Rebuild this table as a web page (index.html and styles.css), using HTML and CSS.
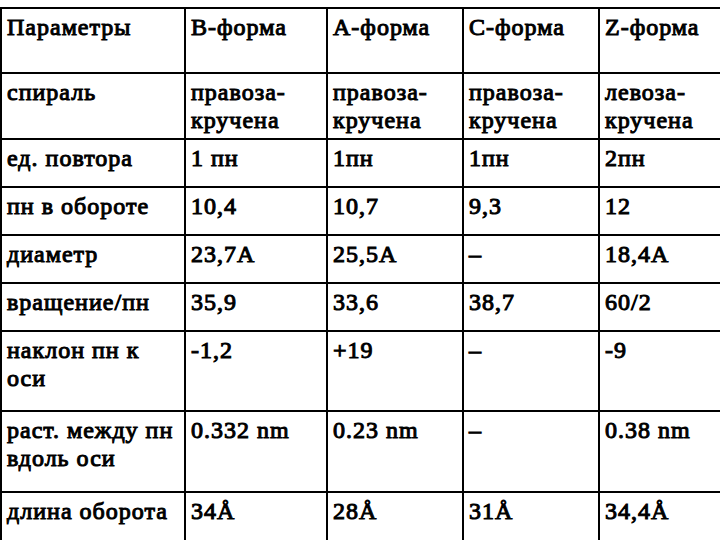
FILE: index.html
```html
<!DOCTYPE html>
<html lang="ru">
<head>
<meta charset="utf-8">
<title>Формы ДНК</title>
<link rel="stylesheet" href="styles.css">
</head>
<body>
<table class="params">
  <colgroup>
    <col class="c-name">
    <col class="c-b">
    <col class="c-a">
    <col class="c-c">
    <col class="c-z">
  </colgroup>
  <tbody>
    <tr class="r-head">
      <td>Параметры</td><td>B-форма</td><td>A-форма</td><td>C-форма</td><td>Z-форма</td>
    </tr>
    <tr class="r-two">
      <td>спираль</td><td>правоза-<br>кручена</td><td>правоза-<br>кручена</td><td>правоза-<br>кручена</td><td>левоза-<br>кручена</td>
    </tr>
    <tr class="r-one">
      <td>ед. повтора</td><td>1 пн</td><td>1пн</td><td>1пн</td><td>2пн</td>
    </tr>
    <tr class="r-one">
      <td>пн в обороте</td><td>10,4</td><td>10,7</td><td>9,3</td><td>12</td>
    </tr>
    <tr class="r-one">
      <td>диаметр</td><td>23,7A</td><td>25,5A</td><td>–</td><td>18,4A</td>
    </tr>
    <tr class="r-one">
      <td>вращение/пн</td><td>35,9</td><td>33,6</td><td>38,7</td><td>60/2</td>
    </tr>
    <tr class="r-tall">
      <td>наклон пн к<br>оси</td><td>-1,2</td><td>+19</td><td>–</td><td>-9</td>
    </tr>
    <tr class="r-tall2">
      <td>раст. между пн<br>вдоль оси</td><td>0.332 nm</td><td>0.23 nm</td><td>–</td><td>0.38 nm</td>
    </tr>
    <tr class="r-tall">
      <td>длина оборота</td><td>34Å</td><td>28Å</td><td>31Å</td><td>34,4Å</td>
    </tr>
  </tbody>
</table>
</body>
</html>
```

FILE: styles.css
```css
html, body {
  margin: 0;
  padding: 0;
  background: #ffffff;
  overflow: hidden;
}

body {
  width: 720px;
  height: 540px;
}

.params {
  margin-top: 7px;
  border-collapse: separate;
  border-spacing: 0;
  table-layout: fixed;
  width: 740px;
  color: #000000;
}

.c-name { width: 184px; }
.c-b { width: 142px; }
.c-a { width: 136px; }
.c-c { width: 136px; }
.c-z { width: 142px; }

/* Liberation Serif ships without a usable bold face here, so the bold
   Times look is built from the regular face with a thin outline. */
.params td {
  font-family: "Liberation Serif", serif;
  font-weight: 400;
  font-size: 24px;
  line-height: 28px;
  letter-spacing: 1px;
  -webkit-text-stroke: 1px #000000;
  border-top: 2px solid #000000;
  border-left: 2px solid #000000;
  padding: 4px 4px 0 5px;
  vertical-align: top;
  white-space: nowrap;
  overflow: hidden;
}

.r-head { height: 65px; }
.r-two { height: 66px; }
.r-one { height: 48px; }
.r-tall { height: 80px; }
.r-tall2 { height: 81px; }
```
